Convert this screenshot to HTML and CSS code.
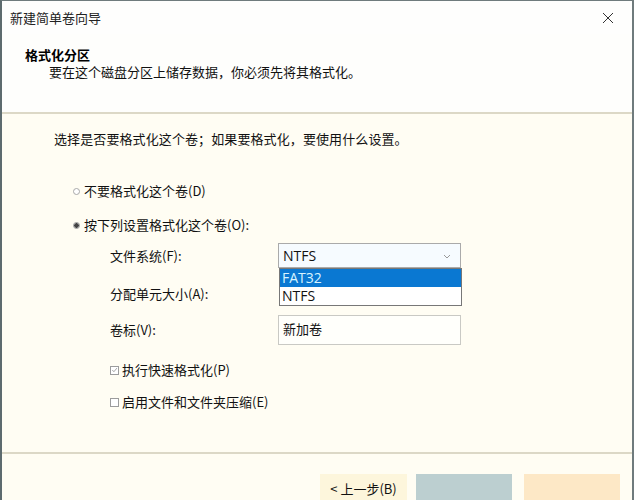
FILE: index.html
```html
<!DOCTYPE html>
<html lang="zh-CN">
<head>
<meta charset="utf-8">
<link rel="stylesheet" href="styles.css">
</head>
<body>
<div class="window">
  <div class="titlebar">
    <span class="title">新建简单卷向导</span>
    <svg class="close" width="12" height="12" viewBox="0 0 12 12"><path d="M1 1L11 11M11 1L1 11" stroke="#333" stroke-width="1" fill="none"/></svg>
  </div>
  <div class="header">
    <div class="h-title">格式化分区</div>
    <div class="h-sub">要在这个磁盘分区上储存数据，你必须先将其格式化。</div>
  </div>
  <div class="sep"></div>
  <div class="content">
    <p class="intro">选择是否要格式化这个卷；如果要格式化，要使用什么设置。</p>
    <div class="radio r1"><span class="rb"></span>不要格式化这个卷(D)</div>
    <div class="radio r2"><span class="rb on"></span>按下列设置格式化这个卷(O):</div>
    <div class="form">
      <div class="row row1">
        <span class="lbl">文件系统(F):</span>
        <div class="select">
          <span>NTFS</span>
          <svg class="chev" width="8" height="5" viewBox="0 0 8 5"><path d="M1 1L4 4L7 1" stroke="#999" fill="none"/></svg>
          <ul class="dropdown">
            <li class="sel">FAT32</li>
            <li>NTFS</li>
          </ul>
        </div>
      </div>
      <div class="row row2">
        <span class="lbl">分配单元大小(A):</span>
      </div>
      <div class="row row3">
        <span class="lbl">卷标(V):</span>
        <div class="input">新加卷</div>
      </div>
      <div class="check c1"><span class="cb"><svg width="8" height="8" viewBox="0 0 8 8"><path d="M1.5 4L3.3 6L6.8 1.8" stroke="#9a9a9a" stroke-width="1" fill="none"/></svg></span>执行快速格式化(P)</div>
      <div class="check c2"><span class="cb"></span>启用文件和文件夹压缩(E)</div>
    </div>
  </div>
  <div class="sep sep2"></div>
  <div class="footer">
    <div class="btn back">&lt; 上一步(B)</div>
    <div class="btn next"></div>
    <div class="btn cancel"></div>
  </div>
</div>
</body>
</html>
```

FILE: styles.css
```css
html, body {
  margin: 0;
  padding: 0;
  background: #fffef7;
}
.window {
  width: 634px;
  height: 500px;
  box-sizing: border-box;
  border-left: 2px solid #5d6b6e;
  border-right: 2px solid #6f7b7d;
  border-top: 1px solid #6f7b7d;
  background: #fffdf3;
  display: flex;
  flex-direction: column;
  overflow: hidden;
  font-family: "Noto Sans CJK SC", "Noto Sans", sans-serif;
  font-size: 13px;
  color: #111;
}
.titlebar {
  height: 33px;
  flex: none;
  display: flex;
  align-items: center;
  justify-content: space-between;
  padding: 0 18px 0 8px;
  background: #fefefd;
}
.title {
  line-height: 16px;
  color: #222;
}
.close {
  display: block;
}
.header {
  height: 78px;
  flex: none;
  box-sizing: border-box;
  padding: 13px 0 0 23px;
  background: #fefefc;
}
.h-title {
  font-weight: bold;
  line-height: 16px;
  color: #000;
}
.h-sub {
  padding-left: 24px;
  line-height: 16px;
  margin-top: 1px;
}
.sep {
  height: 2px;
  flex: none;
  background: #dcd8c6;
}
.content {
  flex: 1;
  padding: 17px 0 0 52px;
  box-sizing: border-box;
}
.intro {
  margin: 0;
  line-height: 16px;
  letter-spacing: 0.1px;
}
.radio {
  display: flex;
  align-items: center;
  line-height: 16px;
  margin-left: 19px;
}
.r1 { margin-top: 36px; }
.r2 { margin-top: 18px; }
.rb {
  width: 7px;
  height: 7px;
  border: 1px solid #a8a8a8;
  border-radius: 50%;
  margin-right: 4px;
  box-sizing: border-box;
  flex: none;
  background: #fff;
}
.rb.on {
  background: radial-gradient(circle, #444 0 2px, #bbb 2.5px, #fff 3px);
  border-color: #999;
}
.form {
  margin-left: 56px;
  margin-top: 10px;
}
.row {
  display: flex;
  align-items: center;
  position: relative;
}
.lbl {
  width: 168px;
  flex: none;
  line-height: 16px;
}
.row1 { height: 25px; }
.row2 { height: 26px; margin-top: 13px; }
.row3 { height: 30px; margin-top: 8px; }
.select {
  position: relative;
  width: 183px;
  height: 25px;
  box-sizing: border-box;
  border: 1px solid #aaa;
  background: #f6fbff;
  display: flex;
  align-items: center;
  padding-left: 4px;
  font-family: "Open Sans", "Noto Sans", sans-serif;
  font-size: 14px;
}
.chev {
  position: absolute;
  right: 9px;
  top: 10px;
}
.dropdown {
  position: absolute;
  left: 0;
  top: 24px;
  width: 183px;
  margin: 0;
  padding: 0;
  list-style: none;
  box-sizing: border-box;
  border: 1px solid #777;
  background: #fff;
  z-index: 2;
}
.dropdown li {
  height: 18px;
  line-height: 18px;
  padding-left: 2px;
  color: #111;
}
.dropdown li.sel {
  background: #0a78d2;
  color: #d7f4ff;
}
.input {
  width: 183px;
  height: 30px;
  box-sizing: border-box;
  border: 1px solid #c9c9c4;
  background: #fffffb;
  padding: 5px 0 0 4px;
  line-height: 16px;
}
.check {
  display: flex;
  align-items: center;
  line-height: 16px;
}
.c1 { margin-top: 17px; }
.c2 { margin-top: 16px; }
.cb {
  width: 9px;
  height: 9px;
  border: 1px solid #9c9c9c;
  box-sizing: border-box;
  margin-right: 3px;
  display: flex;
  align-items: center;
  justify-content: center;
  background: #fff;
  flex: none;
}
.cb svg { display: block; }
.footer {
  height: 46px;
  flex: none;
  display: flex;
  padding: 20px 0 0 318px;
  box-sizing: border-box;
  gap: 9px;
}
.btn {
  height: 30px;
  box-sizing: border-box;
  line-height: 16px;
  padding-top: 7px;
  text-align: center;
}
.back { width: 87px; background: #fdf6dc; }
.next { width: 96px; background: #bccfd0; }
.cancel { width: 96px; background: #fde8c6; margin-left: 3px; }
```
